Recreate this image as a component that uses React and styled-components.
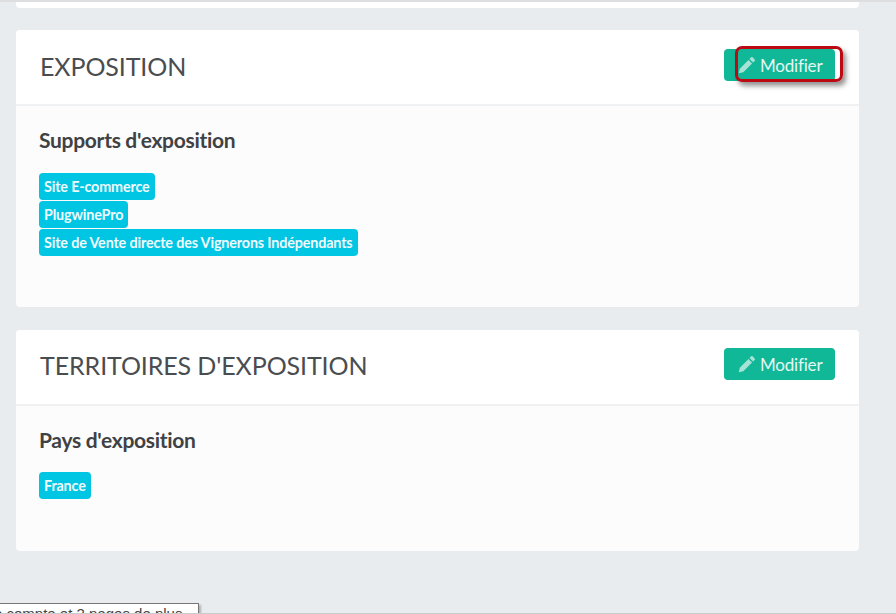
import React from 'react';
import styled, { createGlobalStyle } from 'styled-components';

const GlobalStyle = createGlobalStyle`
  html, body {
    margin: 0;
    padding: 0;
    height: 100%;
    overflow: hidden;
    background: #e9ecef;
    font-family: Lato, "Liberation Sans", sans-serif;
  }
`;

const Page = styled.div`
  position: relative;
  width: 896px;
  height: 614px;
  overflow: hidden;
  box-sizing: border-box;
  border-top: 2px solid #dcdee0;
  border-bottom: 1px solid #c9cbcd;
  background: #e9ecef;
  display: flex;
  flex-direction: column;
  padding: 0 37px 0 16px;
`;

const CardStub = styled.div`
  height: 6px;
  flex: none;
  background: #fff;
  border-radius: 0 0 4px 4px;
`;

const Card = styled.section`
  flex: none;
  height: ${(p) => p.$height}px;
  margin-top: ${(p) => p.$gap}px;
  background: #fcfcfc;
  border-radius: 4px;
  display: flex;
  flex-direction: column;
`;

const CardHeader = styled.header`
  flex: none;
  height: 76px;
  box-sizing: border-box;
  background: #fff;
  border-bottom: 2px solid #f0f1f2;
  border-radius: 4px 4px 0 0;
  display: flex;
  align-items: center;
  justify-content: space-between;
  padding: 0 24px ${(p) => p.$bottom}px 24px;
`;

const CardTitle = styled.h2`
  margin: 2px 0 0;
  font-size: 25px;
  font-weight: 400;
  letter-spacing: -0.1px;
  color: #4a4d50;
`;

const EditButton = styled.button`
  position: relative;
  width: 111px;
  height: 32px;
  border: 0;
  border-radius: 4px;
  background: #10b898;
  color: #e6f7f3;
  font-family: inherit;
  font-size: 17px;
  font-weight: 400;
  letter-spacing: -0.2px;
  display: flex;
  align-items: center;
  gap: 4px;
  padding: 0 0 0 14px;
`;

const Highlight = styled.span`
  position: absolute;
  left: 11px;
  top: -3px;
  width: 108px;
  height: 36px;
  box-sizing: border-box;
  border: 3px solid #bb0a14;
  border-radius: 7px;
  box-shadow: 3px 4px 5px rgba(60, 60, 60, 0.55);
`;

const CardBody = styled.div`
  padding: 21px 23px 0;
`;

const SectionTitle = styled.h3`
  margin: 0 0 ${(p) => p.$bottom}px;
  font-size: 21px;
  line-height: 26px;
  font-weight: 700;
  letter-spacing: -0.3px;
  color: #3f4245;
`;

const Tags = styled.div`
  display: flex;
  flex-direction: column;
  align-items: flex-start;
  gap: 1px;
`;

const Tag = styled.span`
  height: 27px;
  box-sizing: border-box;
  padding: 0 5px;
  border-radius: 4px;
  background: #00c5e3;
  color: #effbfd;
  font-size: 14.35px;
  font-weight: 700;
  letter-spacing: -0.15px;
  line-height: 27px;
  white-space: nowrap;
`;

const Tooltip = styled.div`
  position: absolute;
  left: -1px;
  top: 601px;
  width: 200px;
  height: 20px;
  box-sizing: border-box;
  border: 1px solid #767676;
  background: #fff;
  box-shadow: 2px 2px 2px rgba(0, 0, 0, 0.25);
  color: #444;
  font-family: "Liberation Sans", sans-serif;
  font-size: 15px;
  line-height: 20px;
  white-space: nowrap;
  overflow: hidden;
  text-indent: -31px;
`;

const Pencil = () => (
  <svg width="18" height="18" viewBox="0 0 16 16" fill="#a5e3d6" aria-hidden="true">
    <path d="M11.6 1.2a1 1 0 0 1 1.4 0l1.8 1.8a1 1 0 0 1 0 1.4l-1.4 1.4-3.2-3.2z" />
    <path d="M9.3 3.5l3.2 3.2-7.8 7.8-4 .9.9-4z" />
  </svg>
);

const ExpositionCard = ({ title, subtitle, tags, height, gap, highlighted }) => (
  <Card $height={height} $gap={gap}>
    <CardHeader $bottom={highlighted ? 4 : 6}>
      <CardTitle>{title}</CardTitle>
      <EditButton>
        <Pencil />
        Modifier
        {highlighted && <Highlight />}
      </EditButton>
    </CardHeader>
    <CardBody>
      <SectionTitle $bottom={highlighted ? 20 : 19}>{subtitle}</SectionTitle>
      <Tags>
        {tags.map((tag) => (
          <Tag key={tag}>{tag}</Tag>
        ))}
      </Tags>
    </CardBody>
  </Card>
);

const App = () => {
  return (
    <Page>
      <GlobalStyle />
      <CardStub />
      <ExpositionCard
        title="EXPOSITION"
        subtitle="Supports d'exposition"
        tags={['Site E-commerce', 'PlugwinePro', 'Site de Vente directe des Vignerons Indépendants']}
        height={277}
        gap={22}
        highlighted
      />
      <ExpositionCard
        title="TERRITOIRES D'EXPOSITION"
        subtitle="Pays d'exposition"
        tags={['France']}
        height={221}
        gap={23}
      />
      <Tooltip>votre compte et 2 pages de plus</Tooltip>
    </Page>
  );
};

export default App;
